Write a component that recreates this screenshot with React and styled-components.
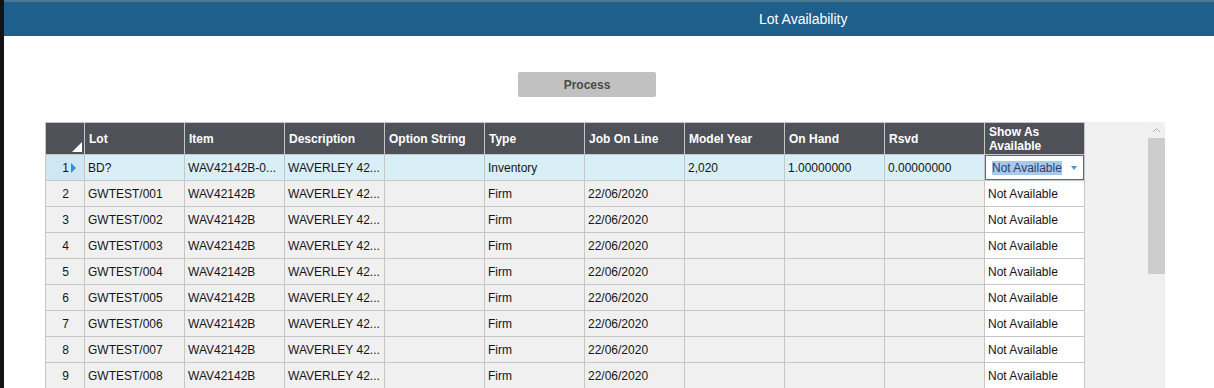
import styled, { createGlobalStyle } from 'styled-components'

const GlobalStyle = createGlobalStyle`
  html, body {
    margin: 0;
    padding: 0;
    background: #ffffff;
    font-family: Arial, "Liberation Sans", sans-serif;
    overflow: hidden;
  }
`

const Page = styled.div`
  display: flex;
  width: 1214px;
  height: 388px;
  overflow: hidden;
`
const LeftEdge = styled.div`
  width: 4px;
  background: #121212;
  flex-shrink: 0;
`
const Main = styled.div`
  flex: 1;
  display: flex;
  flex-direction: column;
  min-width: 0;
`
const TitleBar = styled.div`
  height: 34px;
  flex-shrink: 0;
  border-top: 2px solid #4d7896;
  background: #1f5f8b;
  display: flex;
  align-items: center;
  padding-left: 755px;
  color: #ffffff;
  font-size: 14px;
`
const Toolbar = styled.div`
  display: flex;
  flex-shrink: 0;
  padding: 36px 0 25px 514px;
`
const ProcessButton = styled.button`
  width: 138px;
  height: 25px;
  background: #c1c1c1;
  border: none;
  border-radius: 2px;
  font-family: Arial, "Liberation Sans", sans-serif;
  font-weight: bold;
  font-size: 12px;
  color: #4a4a4a;
  padding: 0;
`
const GridArea = styled.div`
  display: flex;
  align-items: flex-start;
  margin: 0 0 0 41px;
`
const Table = styled.table`
  border-collapse: separate;
  border-spacing: 0;
  table-layout: fixed;
  width: 1040px;
  font-size: 12px;
  color: #151515;
  border-top: 1px solid #c6c6c6;
  border-left: 1px solid #c6c6c6;
`
const HeadCell = styled.th`
  background: #4f5158;
  color: #ffffff;
  font-weight: bold;
  text-align: left;
  height: 32px;
  padding: 0 4px;
  border-right: 1px solid #c6c6c6;
  border-bottom: 1px solid #c6c6c6;
  line-height: 14px;
  white-space: normal;
  position: relative;
  box-sizing: border-box;
`
const Corner = styled.div`
  position: absolute;
  right: 2px;
  bottom: 2px;
  width: 0;
  height: 0;
  border-left: 10px solid transparent;
  border-bottom: 10px solid #ffffff;
`
const Row = styled.tr`
  background: ${(p) => (p.$active ? '#d9eff8' : '#f0f0f0')};
`
const Cell = styled.td`
  height: 26px;
  padding: 0 3px;
  border-right: 1px solid #c6c6c6;
  border-bottom: 1px solid #c6c6c6;
  white-space: nowrap;
  overflow: hidden;
  text-overflow: ellipsis;
  box-sizing: border-box;
  background: ${(p) => (p.$white ? '#ffffff' : 'transparent')};
`
const IndexCell = styled(Cell)`
  text-align: right;
  padding: 0 15px 0 0;
  position: relative;
  background: ${(p) => (p.$active ? '#cfe7f2' : 'transparent')};
`
const Pointer = styled.span`
  position: absolute;
  left: 25px;
  top: 8px;
  width: 0;
  height: 0;
  border-top: 5px solid transparent;
  border-bottom: 5px solid transparent;
  border-left: 5px solid #2f8fdc;
`
const EditCell = styled.td`
  height: 26px;
  padding: 0;
  border-right: 1px solid #c6c6c6;
  border-bottom: 1px solid #c6c6c6;
  background: #ffffff;
  box-sizing: border-box;
`
const SelectBox = styled.div`
  height: 25px;
  box-sizing: border-box;
  border: 1px solid #3b6fc0;
  display: flex;
  align-items: center;
  justify-content: space-between;
  padding: 0 6px 0 6px;
`
const Selected = styled.span`
  background: #a7c9ee;
  color: #2a3f66;
`
const Caret = styled.span`
  width: 0;
  height: 0;
  border-left: 3px solid transparent;
  border-right: 3px solid transparent;
  border-top: 4px solid #4f94d4;
`
const SidePanel = styled.div`
  width: 80px;
  height: 300px;
  background: #f1f1f1;
  display: flex;
  justify-content: flex-end;
`
const ScrollTrack = styled.div`
  width: 17px;
  display: flex;
  flex-direction: column;
  background: #f0f0f0;
`
const ScrollArrow = styled.div`
  height: 16px;
  display: flex;
  align-items: center;
  justify-content: center;
`
const ScrollThumb = styled.div`
  height: 136px;
  background: #cdcdcd;
`

const columns = [
  { key: 'lot', label: 'Lot' },
  { key: 'item', label: 'Item' },
  { key: 'desc', label: 'Description' },
  { key: 'opt', label: 'Option String' },
  { key: 'type', label: 'Type' },
  { key: 'job', label: 'Job On Line' },
  { key: 'year', label: 'Model Year' },
  { key: 'hand', label: 'On Hand' },
  { key: 'rsvd', label: 'Rsvd' },
]

const rows = [
  { lot: 'BD?', item: 'WAV42142B-0...', desc: 'WAVERLEY 42...', opt: '', type: 'Inventory', job: '', year: '2,020', hand: '1.00000000', rsvd: '0.00000000' },
  ...Array.from({ length: 8 }, (_, i) => ({
    lot: `GWTEST/00${i + 1}`,
    item: 'WAV42142B',
    desc: 'WAVERLEY 42...',
    opt: '',
    type: 'Firm',
    job: '22/06/2020',
    year: '',
    hand: '',
    rsvd: '',
  })),
]

export default function App() {
  return (
    <>
      <GlobalStyle />
      <Page>
        <LeftEdge />
        <Main>
          <TitleBar>Lot Availability</TitleBar>
          <Toolbar>
            <ProcessButton>Process</ProcessButton>
          </Toolbar>
          <GridArea>
            <Table>
              <colgroup>
                <col style={{ width: 39 }} />
                {columns.map((c) => (
                  <col key={c.key} style={{ width: 100 }} />
                ))}
                <col style={{ width: 100 }} />
              </colgroup>
              <thead>
                <tr>
                  <HeadCell>
                    <Corner />
                  </HeadCell>
                  {columns.map((c) => (
                    <HeadCell key={c.key}>{c.label}</HeadCell>
                  ))}
                  <HeadCell>Show As Available</HeadCell>
                </tr>
              </thead>
              <tbody>
                {rows.map((r, i) => (
                  <Row key={i} $active={i === 0}>
                    <IndexCell $active={i === 0}>
                      {i + 1}
                      {i === 0 && <Pointer />}
                    </IndexCell>
                    {columns.map((c) => (
                      <Cell key={c.key}>{r[c.key]}</Cell>
                    ))}
                    {i === 0 ? (
                      <EditCell>
                        <SelectBox>
                          <Selected>Not Available</Selected>
                          <Caret />
                        </SelectBox>
                      </EditCell>
                    ) : (
                      <Cell $white>Not Available</Cell>
                    )}
                  </Row>
                ))}
              </tbody>
            </Table>
            <SidePanel>
              <ScrollTrack>
                <ScrollArrow>
                  <svg width="9" height="6" viewBox="0 0 9 6">
                    <path d="M1 5 L4.5 1.5 L8 5" fill="none" stroke="#a8a8a8" strokeWidth="1" />
                  </svg>
                </ScrollArrow>
                <ScrollThumb />
              </ScrollTrack>
            </SidePanel>
          </GridArea>
        </Main>
      </Page>
    </>
  )
}
